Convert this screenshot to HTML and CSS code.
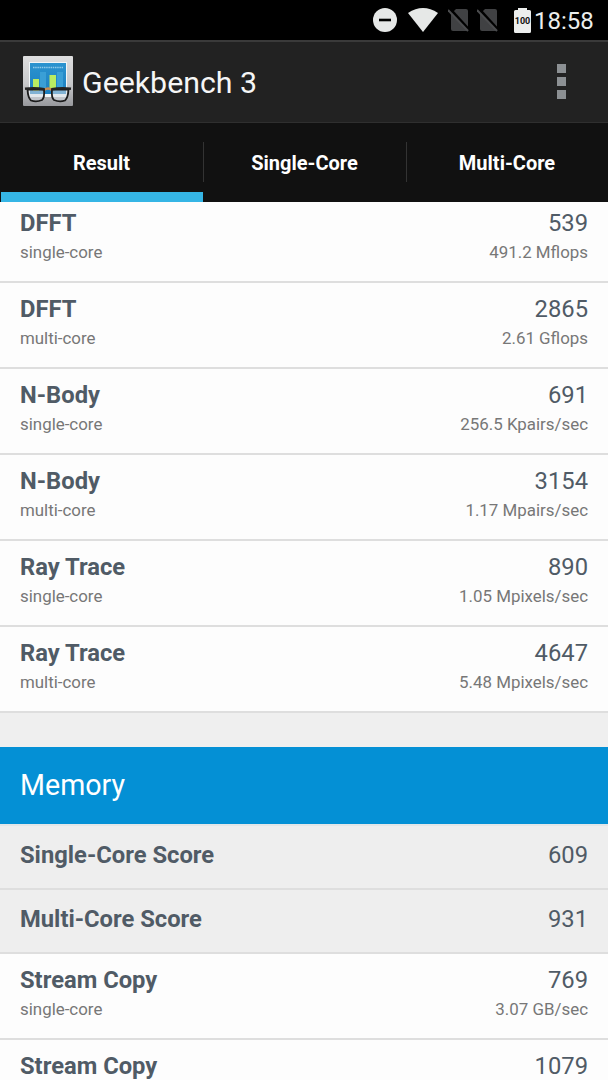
FILE: index.html
```html
<!DOCTYPE html>
<html lang="en">
<head>
  <meta charset="UTF-8">
  <meta name="viewport" content="width=device-width, initial-scale=1">
  <title>Geekbench 3</title>
  <link rel="stylesheet" href="styles.css">
</head>
<body>

  <div class="status-bar">
    <svg class="dnd" width="24" height="24" viewBox="0 0 24 24">
      <circle cx="12" cy="12" r="12" fill="#e6e8e7"/>
      <path d="M6 12h12" stroke="#000" stroke-width="2.600"/>
    </svg>
    <svg class="wifi" width="30" height="24" viewBox="0 0 30 24">
      <path d="M0 5Q15-5 30 5L15 24z" fill="#e6e8e7"/>
    </svg>
    <svg class="sim" width="22" height="24" viewBox="0 0 22 24">
      <path d="M8 1h10q2 0 2 2v18q0 2-2 2H5q-2 0-2-2V6z" fill="#404143"/>
      <path d="M2 1l20 22" stroke="#000" stroke-width="3"/>
      <path d="M0 2l20 21" stroke="#4b4c4e" stroke-width="2"/>
    </svg>
    <svg class="sim" width="22" height="24" viewBox="0 0 22 24">
      <path d="M8 1h10q2 0 2 2v18q0 2-2 2H5q-2 0-2-2V6z" fill="#404143"/>
      <path d="M2 1l20 22" stroke="#000" stroke-width="3"/>
      <path d="M0 2l20 21" stroke="#4b4c4e" stroke-width="2"/>
    </svg>
    <svg class="battery" width="17" height="25" viewBox="0 0 17 25">
      <path d="M4 0h9v2h2.500q1.500 0 1.500 1.500V23.500q0 1.500-1.500 1.500h-14Q0 25 0 23.500V3.500Q0 2 1.500 2H4z" fill="#eceeed"/>
      <text x="8.500" y="15.800" text-anchor="middle">100</text>
    </svg>
    <span class="clock">18:58</span>
  </div>

  <header class="app-bar">
    <svg class="app-icon" width="50" height="50" viewBox="0 0 50 50">
      <defs>
        <linearGradient id="metal" x1="0" y1="0" x2="0" y2="1">
          <stop offset="0" stop-color="#dededf"/>
          <stop offset=".55" stop-color="#c8c9cb"/>
          <stop offset="1" stop-color="#98999d"/>
        </linearGradient>
        <linearGradient id="board" x1="0" y1="0" x2="0" y2="1">
          <stop offset="0" stop-color="#2b93cf"/>
          <stop offset="1" stop-color="#1c7fc0"/>
        </linearGradient>
      </defs>
      <rect width="50" height="50" rx="1" fill="url(#metal)"/>
      <rect x="6" y="6" width="38" height="35" fill="#f2f6f8"/>
      <rect x="7" y="7" width="36" height="31" fill="url(#board)"/>
      <path d="M10 11.500h30" stroke="#8fcbe9" stroke-width="1.600" stroke-dasharray="1.500 .7"/>
      <path d="M17 16h6v18h-6zM34 16h6v18h-6z" fill="#3a9fd6"/>
      <rect x="10" y="23" width="6" height="12" fill="#b9ec62"/>
      <rect x="26.500" y="19" width="6.500" height="14" fill="#b9ec62"/>
      <path d="M21 34q4-3 8 0" fill="none" stroke="#c98a4e" stroke-width="2.500"/>
      <path d="M4.500 33.500H21q.8 8-2 10.500-5.500 2.500-11 .5Q5 42 4.500 33.500zM29 33.500h16.500Q45 42 42 44.500q-5.500 2-11-.5-2.800-2.500-2-10.500z" fill="#d5dde3" fill-opacity=".55" stroke="#1c1c1c" stroke-width="1.800"/>
      <path d="M2 32.800q10-1.200 19.500.4M28.500 33.200q9.500-1.600 19.500-.4" fill="none" stroke="#242424" stroke-width="2.600"/>
    </svg>
    <h1>Geekbench 3</h1>
    <div class="overflow">
      <span></span>
      <span></span>
      <span></span>
    </div>
  </header>

  <nav class="tabs">
    <div class="tab active">Result</div>
    <div class="tab">Single-Core</div>
    <div class="tab">Multi-Core</div>
  </nav>

  <main class="results">
    <div class="list">
      <div class="row">
        <div class="name">DFFT<small>single-core</small></div>
        <div class="value">539<small>491.2 Mflops</small></div>
      </div>
      <div class="row">
        <div class="name">DFFT<small>multi-core</small></div>
        <div class="value">2865<small>2.61 Gflops</small></div>
      </div>
      <div class="row">
        <div class="name">N-Body<small>single-core</small></div>
        <div class="value">691<small>256.5 Kpairs/sec</small></div>
      </div>
      <div class="row">
        <div class="name">N-Body<small>multi-core</small></div>
        <div class="value">3154<small>1.17 Mpairs/sec</small></div>
      </div>
      <div class="row">
        <div class="name">Ray Trace<small>single-core</small></div>
        <div class="value">890<small>1.05 Mpixels/sec</small></div>
      </div>
      <div class="row">
        <div class="name">Ray Trace<small>multi-core</small></div>
        <div class="value">4647<small>5.48 Mpixels/sec</small></div>
      </div>

      <h2>Memory</h2>
      <div class="row score">
        <div class="name">Single-Core Score</div>
        <div class="value">609</div>
      </div>
      <div class="row score">
        <div class="name">Multi-Core Score</div>
        <div class="value">931</div>
      </div>
      <div class="row">
        <div class="name">Stream Copy<small>single-core</small></div>
        <div class="value">769<small>3.07 GB/sec</small></div>
      </div>
      <div class="row">
        <div class="name">Stream Copy</div>
        <div class="value">1079</div>
      </div>
    </div>
  </main>

</body>
</html>
```
FILE: styles.css
```css
* { box-sizing: border-box; }

body {
  margin: 0;
  height: 1080px;
  display: flex;
  flex-direction: column;
  overflow: hidden;
  font-family: Roboto, sans-serif;
  background: #efefef;
  color: #505b66;
}

/* system bar */
.status-bar {
  height: 40px;
  flex: none;
  display: flex;
  align-items: center;
  justify-content: flex-end;
  padding-right: 14px;
  background: #000;
}

.dnd { margin-right: 11px; }
.wifi { margin-right: 10px; }
.sim { margin-right: 7px; }
.battery { margin: 0 3px 0 8px; }

.battery text {
  font-size: 9px;
  font-weight: 700;
  fill: #111;
}

.clock {
  width: 60px;
  font-size: 24px;
  line-height: 40px;
  padding-top: 2px;
  color: #eceeed;
  white-space: nowrap;
}

/* action bar */
.app-bar {
  height: 83px;
  flex: none;
  display: flex;
  align-items: center;
  padding: 0 42px 2px 23px;
  background: #222;
  border-top: 2px solid #3a3a3a;
  border-bottom: 1px solid #2f2f2f;
}

h1 {
  margin: 0 auto 0 9px;
  padding-top: 2px;
  font-size: 30.3px;
  font-weight: 400;
  color: #f6f6f6;
}

.overflow {
  display: flex;
  flex-direction: column;
  gap: 4px;
}

.overflow span {
  width: 9px;
  height: 9px;
  background: #8c9093;
}

/* tabs */
.tabs {
  height: 79px;
  flex: none;
  display: grid;
  grid-template-columns: 203px 203px 202px;
  background: #111;
}

.tab {
  display: flex;
  align-items: center;
  justify-content: center;
  font-size: 20px;
  font-weight: 700;
  color: #fff;
}

.tab + .tab {
  background: linear-gradient(#333, #333) left 19px / 1px 40px no-repeat;
}

.tab.active {
  margin-left: 1px;
  padding: 10px 1px 0 0;
  border-bottom: 10px solid #35b5e5;
}

/* scrolled list */
.results {
  flex: 1;
  overflow: hidden;
}

.list { margin-top: -5px; }

.row {
  height: 86px;
  display: flex;
  justify-content: space-between;
  padding: 12px 20px 0;
  font-size: 23.75px;
  line-height: 28px;
  background: #fdfdfd;
  border-bottom: 2px solid #dedede;
}

.name { font-weight: 700; }
.value { text-align: right; }

small {
  display: block;
  margin-top: 4px;
  font-size: 16.9px;
  font-weight: 400;
  line-height: 22px;
  color: #777;
}

h2 {
  height: 79px;
  margin: 34px 0 0;
  padding-left: 20px;
  font-size: 28.6px;
  font-weight: 400;
  line-height: 76px;
  color: #fff;
  background: #0490d5;
  border-bottom: 2px solid #e2e6e8;
}

.score {
  height: 64px;
  padding-top: 15px;
  background: #eee;
}
```
